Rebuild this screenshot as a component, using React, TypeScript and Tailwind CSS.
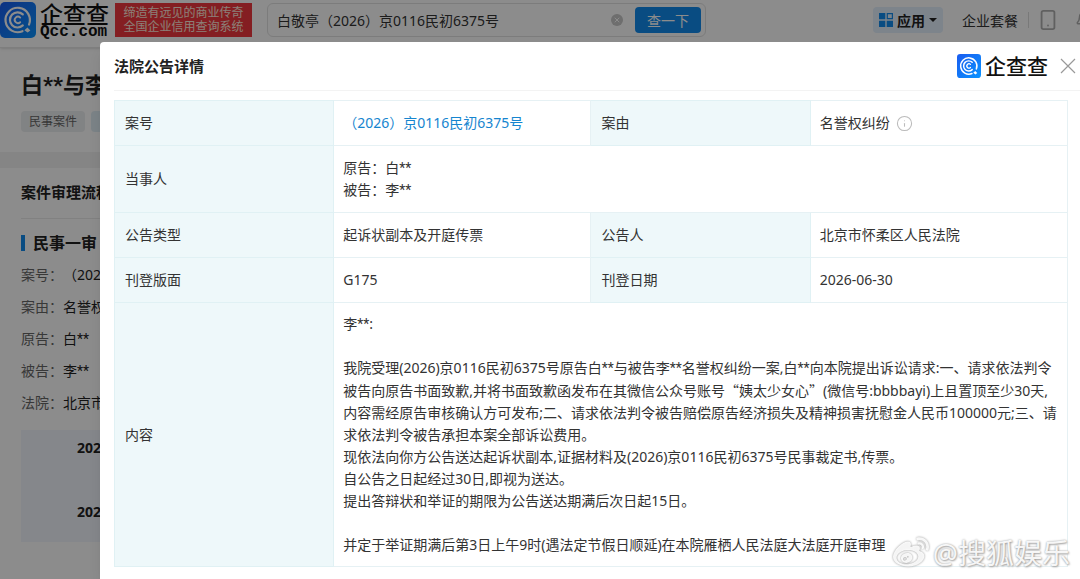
import React from "react";
import { FaWeibo } from "react-icons/fa";
import { Bell, Info, Smartphone, X } from "lucide-react";

const labelCell =
  "border border-[#e0f1f4] bg-[#eef8fa] px-2.5 py-[11px] text-left align-middle font-normal";
const valueCell = "border border-[#e6f1f4] px-[9px] py-[11px] align-middle";

function LogoMark({ className }: { className: string }) {
  return (
    <svg viewBox="0 0 36 36" className={className} aria-hidden="true">
      <defs>
        <linearGradient id="logoBlue" x1="0" y1="0" x2="1" y2="1">
          <stop offset="0" stopColor="#1a5cf0" />
          <stop offset="1" stopColor="#0a94ff" />
        </linearGradient>
      </defs>
      <rect width="36" height="36" rx="5" fill="url(#logoBlue)" />
      <g fill="none" stroke="#fff" strokeLinecap="round">
        <path d="M22.5 29.2A12.2 12.2 0 1 1 29 22.6" strokeWidth="2.2" />
        <path d="M22.8 23.4A7.6 7.6 0 1 1 22.8 12.4" strokeWidth="2.2" />
        <path d="M20.2 20.2A3.2 3.2 0 1 1 20.2 15.6" strokeWidth="1.9" />
      </g>
      <path d="M27.4 25.6l3 3-2.8 2-3.2-2.4z" fill="#fff" />
    </svg>
  );
}

function Masked({ name }: { name: string }) {
  return (
    <>
      {name}
      <span className="font-[Roboto]">**</span>
    </>
  );
}

function TopBar() {
  return (
    <header className="flex h-12 items-start border-b border-[#e6e6e6] bg-white shadow-sm">
      <a href="#home" className="flex shrink-0 items-start gap-1 pt-0.5" aria-label="企查查">
        <LogoMark className="size-9" />
        <span className="flex w-[72px] flex-col text-[#111]">
          <span className="text-[23px] leading-6 font-medium">企查查</span>
          <span className="font-['Liberation_Mono'] text-[16px] leading-3 font-bold">Qcc.com</span>
        </span>
      </a>
      <p className="mt-[3px] ml-[3px] flex h-[34px] w-[137px] shrink-0 flex-col justify-center bg-[#f0383e] text-center text-[12px] leading-[14px] text-[#ffe9dc]">
        <span>缔造有远见的商业传奇</span>
        <span>全国企业信用查询系统</span>
      </p>
      <form className="mt-[3px] ml-[15px] flex h-[34px] w-[439px] items-center rounded-md border border-[#e2e2e2] pr-1 pl-[9px]">
        <input
          aria-label="搜索"
          defaultValue="白敬亭（2026）京0116民初6375号"
          className="min-w-0 flex-1 bg-transparent text-[14px] text-[#333] outline-none"
        />
        <button type="button" aria-label="清除" className="mr-3 flex size-3 items-center justify-center rounded-full bg-[#c8c8c8] text-white">
          <X className="size-2" strokeWidth={3} />
        </button>
        <button type="button" className="h-[26px] w-[66px] rounded bg-[#128bed] text-[14px] text-white">
          查一下
        </button>
      </form>
      <nav className="mt-[7px] -mr-[13px] ml-auto flex h-[26px] shrink-0 items-center text-[14px] text-[#333]">
        <button type="button" className="flex h-[26px] w-[70px] items-center gap-1 rounded-sm bg-[#e3f0fd] pl-1.5 font-bold text-[#222]">
          <svg viewBox="0 0 14 14" className="size-3.5" aria-hidden="true">
            <path d="M0 0h6.3v6.3H0zM0 7.7h6.3V14H0zM7.7 7.7H14V14H7.7z" fill="#128bed" />
            <path d="M8.3.6h5.1v5.1H8.3z" fill="none" stroke="#128bed" strokeWidth="1.2" />
          </svg>
          应用
          <svg viewBox="0 0 8 4" className="h-1 w-2" aria-hidden="true">
            <path d="M0 0h8L4 4z" fill="#222" />
          </svg>
        </button>
        <a href="#plans" className="ml-[19px]">企业套餐</a>
        <span className="ml-[10px] h-4 w-px bg-[#dcdcdc]" />
        <a href="#mobile" aria-label="手机版" className="ml-2 text-[#b0b0b0]">
          <Smartphone className="size-[22px]" strokeWidth={2} />
        </a>
        <a href="#messages" aria-label="消息" className="ml-4 text-[#b0b0b0]">
          <Bell className="size-[18px]" strokeWidth={2} />
        </a>
      </nav>
    </header>
  );
}

const facts = [
  { label: "案号：", value: "（2026）京0116民初6375号" },
  { label: "案由：", value: "名誉权纠纷" },
  { label: "原告：", value: <Masked name="白" /> },
  { label: "被告：", value: <Masked name="李" /> },
  { label: "法院：", value: "北京市怀柔区人民法院" },
];

function CasePage() {
  return (
    <main className="text-[14px] text-[#222]">
      <section className="border-b-[16px] border-[#f3f3f3] px-[21px] pt-5 pb-5">
        <h1 className="text-[22px] leading-8 font-bold">
          <Masked name="白" />与<Masked name="李" />名誉权纠纷
        </h1>
        <div className="mt-[9px] flex gap-1.5">
          <span className="rounded-sm bg-[#eceef0] px-2 text-[12px] leading-[21px] text-[#666]">民事案件</span>
          <span className="w-16 rounded-sm bg-[#e0eef6]" />
        </div>
      </section>
      <section className="px-[21px]">
        <h2 className="border-b border-[#ececec] pt-[13px] pb-[15px] text-[15px] leading-[22px] font-bold">
          案件审理流程
        </h2>
        <h3 className="mt-[13px] flex items-center gap-2 text-[16px] leading-[22px] font-bold">
          <span className="h-4 w-1 bg-[#128bed]" />
          民事一审
        </h3>
        <dl className="mt-[5px]">
          {facts.map(({ label, value }) => (
            <div key={label} className="flex leading-8">
              <dt className="text-[#666]">{label}</dt>
              <dd>{value}</dd>
            </div>
          ))}
        </dl>
        <ol className="mt-[11px] h-28 bg-[#f2f6fd] pt-[7px] pl-14 font-bold">
          <li className="h-16 leading-[22px]">2026</li>
          <li className="leading-[22px]">2026</li>
        </ol>
      </section>
    </main>
  );
}

function NoticeTable() {
  return (
    <table className="w-full table-fixed border-collapse text-[14px] leading-[22px] text-[#333]">
      <colgroup>
        <col className="w-[23%]" />
        <col className="w-[27%]" />
        <col className="w-[23%]" />
        <col className="w-[27%]" />
      </colgroup>
      <tbody>
        <tr>
          <th scope="row" className={labelCell}>案号</th>
          <td className={valueCell}>
            <a href="#case" className="text-[#1685cf]">（2026）京0116民初6375号</a>
          </td>
          <th scope="row" className={labelCell}>案由</th>
          <td className={valueCell}>
            <span className="flex items-center gap-1.5">
              名誉权纠纷
              <Info className="size-[17px] text-[#bbb]" strokeWidth={1.5} />
            </span>
          </td>
        </tr>
        <tr>
          <th scope="row" className={labelCell}>当事人</th>
          <td colSpan={3} className={valueCell}>
            <p>原告：<Masked name="白" /></p>
            <p>被告：<Masked name="李" /></p>
          </td>
        </tr>
        <tr>
          <th scope="row" className={labelCell}>公告类型</th>
          <td className={valueCell}>起诉状副本及开庭传票</td>
          <th scope="row" className={labelCell}>公告人</th>
          <td className={valueCell}>北京市怀柔区人民法院</td>
        </tr>
        <tr>
          <th scope="row" className={labelCell}>刊登版面</th>
          <td className={valueCell}>G175</td>
          <th scope="row" className={labelCell}>刊登日期</th>
          <td className={valueCell}>2026-06-30</td>
        </tr>
        <tr>
          <th scope="row" className={labelCell}>内容</th>
          <td colSpan={3} className="border border-[#e6f1f4] py-2.5 pl-[9px] align-middle whitespace-nowrap">
            <p><Masked name="李" />:</p>
            <br />
            <p>
              我院受理(2026)京0116民初6375号原告<Masked name="白" />与被告<Masked name="李" />名誉权纠纷一案,<Masked name="白" />向本院提出诉讼请求:一、请求依法判令
              <br />
              被告向原告书面致歉,并将书面致歉函发布在其微信公众号账号
              <span className="font-['Noto_Sans_CJK_SC']">“姨太少女心”</span>
              (微信号:bbbbayi)上且置顶至少30天,
              <br />
              内容需经原告审核确认方可发布;二、请求依法判令被告赔偿原告经济损失及精神损害抚慰金人民币100000元;三、请
              <br />
              求依法判令被告承担本案全部诉讼费用。
            </p>
            <p>现依法向你方公告送达起诉状副本,证据材料及(2026)京0116民初6375号民事裁定书,传票。</p>
            <p>自公告之日起经过30日,即视为送达。</p>
            <p>提出答辩状和举证的期限为公告送达期满后次日起15日。</p>
            <br />
            <p>并定于举证期满后第3日上午9时(遇法定节假日顺延)在本院雁栖人民法庭大法庭开庭审理</p>
          </td>
        </tr>
      </tbody>
    </table>
  );
}

export default function App() {
  return (
    <div
      lang="zh-CN"
      className="relative h-screen overflow-hidden bg-white font-['Noto_Sans','Noto_Sans_CJK_SC',sans-serif]"
    >
      <TopBar />
      <CasePage />
      <div className="absolute inset-0 flex bg-black/45 pt-[42px] pl-[100px]">
        <div role="dialog" aria-labelledby="notice-title" className="min-w-0 flex-1 rounded-tl bg-white pl-[14px] shadow-lg">
          <div className="flex h-[49px] items-center border-b border-[#f3f3f3]">
            <h2 id="notice-title" className="text-[15px] font-bold text-[#222]">法院公告详情</h2>
            <span className="ml-auto flex items-center gap-1 text-[21px] leading-6 font-medium text-[#111]">
              <LogoMark className="size-6" />
              企查查
            </span>
            <button type="button" aria-label="关闭" className="mr-1 ml-3 text-[#999]">
              <svg viewBox="0 0 16 16" className="size-4" aria-hidden="true">
                <path d="M1 1l14 14M15 1L1 15" fill="none" stroke="currentColor" strokeWidth="1.2" />
              </svg>
            </button>
          </div>
          <div className="pt-[9px] pr-3">
            <NoticeTable />
          </div>
        </div>
      </div>
      <div className="absolute right-2.5 bottom-2 flex items-center gap-1 text-[28px] leading-9 text-white/90 [text-shadow:0_0_2px_#999,1px_1px_2px_#aaa]">
        <FaWeibo className="size-9 drop-shadow-[0_0_1px_#888]" />
        <span>@搜狐娱乐</span>
      </div>
    </div>
  );
}
